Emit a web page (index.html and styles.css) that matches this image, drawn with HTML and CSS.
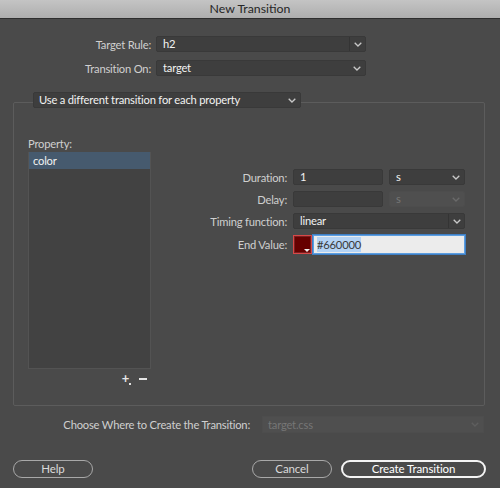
FILE: index.html
```html
<!DOCTYPE html>
<html>
<head>
<meta charset="utf-8">
<link rel="stylesheet" href="styles.css">
</head>
<body>
<div class="win">
  <div class="titlebar">New Transition</div>
  <div class="top">
    <div class="frow">
      <span class="lbl">Target Rule:</span>
      <div class="sel w210 split"><span class="val">h2</span><span class="arr"><svg width="8" height="5" viewBox="0 0 8 5"><path d="M0.7 0.7 L4 4 L7.3 0.7" fill="none" stroke="#c8c8c8" stroke-width="1.3"/></svg></span></div>
    </div>
    <div class="frow">
      <span class="lbl">Transition On:</span>
      <div class="sel w210"><span class="val">target</span><span class="arr"><svg width="8" height="5" viewBox="0 0 8 5"><path d="M0.7 0.7 L4 4 L7.3 0.7" fill="none" stroke="#c8c8c8" stroke-width="1.3"/></svg></span></div>
    </div>
  </div>
  <div class="mode sel"><span class="val">Use a different transition for each property</span><span class="arr"><svg width="8" height="5" viewBox="0 0 8 5"><path d="M0.7 0.7 L4 4 L7.3 0.7" fill="none" stroke="#c8c8c8" stroke-width="1.3"/></svg></span></div>
  <div class="group">
    <div class="leftcol">
      <div class="plabel">Property:</div>
      <div class="plist"><div class="item on">color</div></div>
      <div class="pbtns">
        <span class="plus">+<i class="dot"></i></span>
        <span class="minus"></span>
      </div>
    </div>
    <div class="fields">
      <span class="flbl">Duration:</span>
      <div class="inp"><span class="val">1</span></div>
      <div class="sel"><span class="val">s</span><span class="arr"><svg width="8" height="5" viewBox="0 0 8 5"><path d="M0.7 0.7 L4 4 L7.3 0.7" fill="none" stroke="#c8c8c8" stroke-width="1.3"/></svg></span></div>

      <span class="flbl">Delay:</span>
      <div class="inp"></div>
      <div class="sel dis"><span class="val">s</span><span class="arr"><svg width="8" height="5" viewBox="0 0 8 5"><path d="M0.7 0.7 L4 4 L7.3 0.7" fill="none" stroke="#6a6a6a" stroke-width="1.3"/></svg></span></div>

      <span class="flbl">Timing function:</span>
      <div class="sel span2 split"><span class="val">linear</span><span class="arr"><svg width="8" height="5" viewBox="0 0 8 5"><path d="M0.7 0.7 L4 4 L7.3 0.7" fill="none" stroke="#c8c8c8" stroke-width="1.3"/></svg></span></div>

      <span class="flbl">End Value:</span>
      <div class="endval span2">
        <span class="swatch"><i class="tri"></i></span>
        <div class="hex"><span class="hl">#660000</span></div>
      </div>
    </div>
  </div>
  <div class="where">
    <span class="wlbl">Choose Where to Create the Transition:</span>
    <div class="sel dis wsel"><span class="val">target.css</span><span class="arr"><svg width="8" height="5" viewBox="0 0 8 5"><path d="M0.7 0.7 L4 4 L7.3 0.7" fill="none" stroke="#5e5e5e" stroke-width="1.3"/></svg></span></div>
  </div>
  <div class="buttons">
    <button class="btn help">Help</button>
    <span class="spacer"></span>
    <button class="btn cancel">Cancel</button>
    <button class="btn primary">Create Transition</button>
  </div>
</div>
</body>
</html>
```
FILE: styles.css
```css
* { box-sizing: border-box; }
html, body { margin: 0; padding: 0; }
body {
  width: 500px;
  height: 488px;
  background: #4a4a4a;
  font-family: Lato, "Liberation Sans", sans-serif;
  font-size: 11.2px;
  letter-spacing: -0.2px;
  color: #d2d2d2;
  overflow: hidden;
}
.win { width: 500px; height: 488px; display: flex; flex-direction: column; }
.titlebar {
  height: 19px;
  background: linear-gradient(#c4c4c4, #aeaeae);
  border-bottom: 1px solid #2e2e2e;
  color: #262626;
  font-size: 12.3px;
  letter-spacing: 0;
  line-height: 18px;
  text-align: center;
}
.top { padding-top: 17px; display: flex; flex-direction: column; gap: 8px; }
.frow { display: flex; align-items: center; height: 16px; }
.lbl { width: 151px; text-align: right; margin-right: 5px; color: #d0d0d0; }
.sel {
  height: 16px;
  background: #3e3e3e;
  border: 1px solid #393939;
  border-radius: 2px;
  display: flex;
  align-items: center;
  color: #f2f2f2;
}
.sel .val { flex: 1; padding-left: 6px; white-space: nowrap; overflow: hidden; line-height: 14px; }
.sel .arr { width: 16px; height: 100%; display: flex; align-items: center; justify-content: center; }
.sel.split .arr { border-left: 1px solid #343434; }
.w210 { width: 210px; }
.mode { width: 268px; margin-left: 33px; margin-top: 16px; position: relative; z-index: 1; }
.mode .val { padding-left: 5px; }
.group {
  margin: -6px 0 0 13px;
  width: 472px;
  height: 304px;
  border: 1px solid #5c5c5c;
  border-radius: 2px;
  padding: 34px 0 0 14px;
  display: flex;
}
.leftcol { width: 123px; display: flex; flex-direction: column; }
.plabel { height: 15px; line-height: 13px; color: #cfcfcf; }
.plist {
  height: 217px;
  background: #424242;
  border: 1px solid #535353;
  border-top: none;
}
.item { height: 17px; line-height: 17px; padding-left: 4px; color: #f2f2f2; }
.item.on { background: #465a6e; }
.pbtns { display: flex; justify-content: flex-end; align-items: center; gap: 10px; height: 18px; padding-right: 4px; }
.plus { position: relative; color: #e6e6e6; font-weight: bold; font-size: 13px; line-height: 12px; }
.dot { position: absolute; right: -2px; bottom: -1px; width: 2px; height: 2px; background: #e0e0e0; }
.minus { width: 8px; height: 2px; background: #e6e6e6; margin-top: 1px; }
.fields {
  margin-top: 32px;
  margin-left: 6px;
  display: grid;
  grid-template-columns: 130px 90px 76px;
  column-gap: 6px;
  row-gap: 6px;
  align-content: start;
  align-items: center;
}
.flbl { text-align: right; color: #cfcfcf; }
.inp { height: 16px; background: #3e3e3e; border: 1px solid #393939; border-radius: 2px; color: #f2f2f2; line-height: 14px; padding-left: 6px; }
.span2 { grid-column: 2 / 4; }
.dis { background: #4f4f4f; border-color: #4d4d4d; color: #767676; }
.endval { display: flex; height: 19px; gap: 1px; }
.swatch {
  width: 19px; height: 19px;
  border: 1px solid #d84848;
  background: #660000;
  box-shadow: inset 0 0 0 1px #7a2020;
  position: relative;
}
.tri { position: absolute; right: 1px; bottom: 1px; width: 0; height: 0; border-left: 3px solid transparent; border-right: 3px solid transparent; border-top: 3px solid #f0f0f0; }
.hex {
  flex: 1;
  background: #ececec;
  border: 1px solid #5d9ee0;
  box-shadow: 0 0 0 1px #3f7fc4;
  color: #3a3a3a;
  line-height: 17px;
  padding-left: 3px;
}
.hl { background: #b4d3f5; padding: 1px 0; }
.where { display: flex; align-items: center; margin-top: 10px; height: 17px; }
.wlbl { width: 250px; text-align: right; margin-right: 12px; color: #cfcfcf; }
.wsel { width: 222px; height: 17px; border-radius: 0; }
.wsel .val { padding-left: 5px; }
.buttons { display: flex; align-items: center; margin-top: 27px; padding-left: 13px; }
.spacer { width: 159px; }
.btn {
  height: 18px;
  border-radius: 9px;
  border: 1px solid #a8a8a8;
  background: transparent;
  color: #dadada;
  font-family: Lato, "Liberation Sans", sans-serif;
  font-size: 11.5px;
  letter-spacing: -0.1px;
  padding: 0;
  line-height: 16px;
}
.help { width: 80px; }
.cancel { width: 80px; }
.primary { width: 145px; margin-left: 9px; border: 2px solid #f4f4f4; color: #ffffff; line-height: 14px; }
```
